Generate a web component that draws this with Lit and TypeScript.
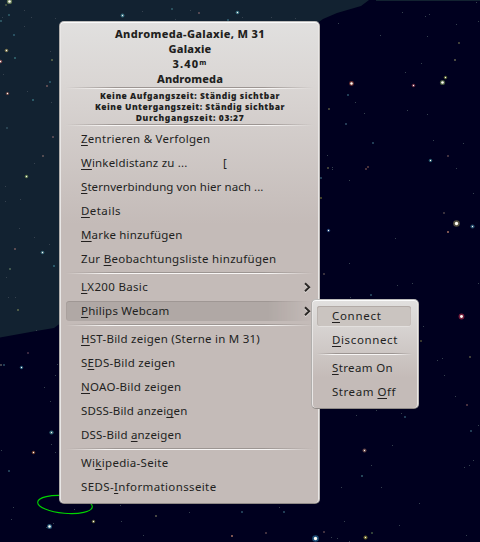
import { LitElement, html, svg, css, nothing } from "lit";
import { customElement, property } from "lit/decorators.js";

type Item = { text: string; key?: number; width: number; shortcut?: string; sub?: boolean; active?: boolean };
type Entry = Item | null;

/** A run of text spread to a given width through its letter spacing; `key` is the accelerator's index. */
@customElement("fit-text")
class FitText extends LitElement {
  @property() text = "";
  @property({ type: Number }) key = -1;
  @property({ type: Number }) width = 0;

  static styles = css`
    :host { display: inline-block; white-space: pre; }
    u { text-decoration: underline 1px; text-underline-offset: 2px; text-decoration-skip-ink: none; }
  `;

  private fit() {
    const span = this.renderRoot.querySelector("span") as HTMLElement;
    span.style.letterSpacing = "0px";
    const natural = span.getBoundingClientRect().width;
    span.style.letterSpacing = `${(this.width - natural) / this.text.length}px`;
  }

  updated() {
    this.fit();
    document.fonts.ready.then(() => this.fit());
  }

  render() {
    const { text: t, key: k } = this;
    return k < 0
      ? html`<span>${t}</span>`
      : html`<span>${t.slice(0, k)}<u>${t[k]}</u>${t.slice(k + 1)}</span>`;
  }
}

@customElement("menu-list")
class MenuList extends LitElement {
  @property({ attribute: false }) entries: Entry[] = [];

  static styles = css`
    :host { display: block; }
    .row {
      position: relative;
      display: flex;
      align-items: center;
      height: 24px;
      box-sizing: border-box;
      padding: 0 2px 0 15px;
    }
    .label { flex: 1; height: 24px; line-height: 24px; z-index: 1; }
    .keys { position: absolute; left: 157px; line-height: 24px; }
    .arrow { z-index: 1; width: 7px; height: 11px; }
    .arrow path { fill: none; stroke: #2b2826; stroke-width: 1.9; }
    .arrow .lit { stroke: #e4e0de; }
    .glow {
      position: absolute;
      inset: 2px 0 2px 0;
      border-radius: 3px;
      background: #b0a8a5;
      box-shadow: inset 0 1px #9f9794, inset 1px 0 #aaa19e, 0 1px #cfc8c5;
      -webkit-mask-image: linear-gradient(90deg, #000 82%, transparent);
      mask-image: linear-gradient(90deg, #000 82%, transparent);
    }
    .glow.plain {
      inset: 2px 1px 2px 0;
      background: #cac4c0;
      box-shadow: inset 0 1px #b2aaa6, inset 1px 0 #bbb4b0, inset -1px 0 #c4bcb8, 0 1px #e3e0de;
      -webkit-mask-image: none;
      mask-image: none;
    }
    .sep {
      height: 2px;
      padding: 1px 0;
    }
    .sep i { display: block; height: 1px; background: linear-gradient(90deg, transparent, #9c9592 20%, #9c9592 80%, transparent); }
    .sep i + i { background: linear-gradient(90deg, transparent, #f8f6f5 16%, #f8f6f5 82%, transparent); }
  `;

  render() {
    return this.entries.map((e) =>
      e === null
        ? html`<div class="sep"><i></i><i></i></div>`
        : html`<div class="row">
            ${e.active ? html`<div class="glow ${e.sub ? "" : "plain"}"></div>` : nothing}
            <div class="label"><fit-text .text=${e.text} .key=${e.key ?? -1} .width=${e.width}></fit-text></div>
            ${e.shortcut ? html`<span class="keys">${e.shortcut}</span>` : nothing}
            ${e.sub
              ? html`<svg class="arrow" viewBox="0 0 7 11">
                  <path class="lit" d="M1 2.2 L5.2 6.2 L1 10.2" />
                  <path d="M1 1.2 L5.2 5.2 L1 9.2" />
                </svg>`
              : nothing}
          </div>`
    );
  }
}

/* x, y of faint single-pixel stars */
const DOTS: number[][] = [
  [24, 10], [24, 26], [142, 11], [190, 10], [175, 19], [50, 51], [3, 74], [27, 91], [51, 102], [34, 163],
  [2, 17], [31, 17], [55, 18], [242, 17], [271, 17], [295, 18], [338, 23], [402, 12], [425, 16], [429, 14],
  [456, 24], [476, 2], [380, 35], [427, 36], [421, 63], [405, 72], [355, 102], [364, 113], [407, 110], [427, 114],
  [433, 140], [463, 143], [327, 155], [332, 167], [332, 169], [456, 168], [478, 21],
  [5, 186], [5, 201], [20, 199], [19, 228], [34, 237], [49, 244], [6, 277], [8, 297], [15, 297], [36, 330],
  [349, 180], [473, 193], [395, 238], [349, 263], [397, 285], [412, 283], [350, 297], [423, 326], [442, 358], [478, 283],
  [55, 375], [44, 387], [50, 401], [51, 444], [55, 452], [1, 450], [13, 507], [11, 519], [53, 523], [46, 527], [74, 509],
  [120, 505], [121, 521], [143, 535], [189, 512], [437, 360], [444, 375], [455, 396], [356, 415], [376, 410], [401, 413],
  [478, 425], [392, 445], [371, 465], [341, 487], [381, 487], [464, 467], [469, 465], [473, 460], [419, 503], [279, 507],
  [344, 521], [399, 525], [331, 537], [337, 538], [349, 541], [466, 535], [57, 364],
];
/* x, y, colour of small coloured stars, two pixels wide */
const SMALL: [number, number, string][] = [
  [5, 4, "#3c4b40"], [8, 14, "#29505d"], [0, 20, "#2b525f"], [13, 34, "#285061"], [14, 57, "#2b5963"], [51, 59, "#4d5a46"],
  [49, 81, "#285061"], [46, 85, "#5a4a50"], [32, 99, "#2b5966"], [6, 127, "#294352"], [52, 136, "#524751"], [42, 155, "#524b50"],
  [171, 8, "#29505d"], [198, 12, "#524751"], [227, 19, "#285061"], [218, 42, "#464646"],
  [458, 42, "#3f3f38"], [454, 59, "#4a4a42"], [347, 94, "#203c55"], [328, 108, "#3f3f38"], [345, 123, "#243a55"], [372, 142, "#203c55"],
  [447, 155, "#40303f"], [367, 166, "#47303a"], [365, 168, "#47303a"], [327, 167, "#3f3f38"], [320, 177, "#203c55"],
  [14, 248, "#5a4a50"], [9, 268, "#41584f"], [53, 265, "#29596a"], [17, 309, "#4d5a46"], [27, 352, "#38263f"],
  [443, 212, "#38303c"], [447, 231, "#7a5350"], [320, 197, "#3f3f28"], [323, 273, "#38303c"], [370, 294, "#203c55"], [420, 340, "#38382f"],
  [469, 356, "#3f3f38"], [0, 364, "#40404a"], [3, 364, "#203c55"], [8, 470, "#203c55"], [155, 515, "#464642"], [231, 535, "#7a5350"],
  [466, 404, "#47303f"], [404, 416, "#203c55"], [470, 430, "#203c55"], [361, 475, "#244558"], [241, 511, "#203c55"],
  [265, 532, "#40303f"], [323, 531, "#40303f"], [371, 532, "#303f38"], [283, 511, "#203c55"],
];
/* x, y, halo colour, halo radius of bright stars */
const BRIGHT: [number, number, string, number][] = [
  [9, 1, "#9ab36a", 2.6], [122, 15, "#4f9fb0", 1.9], [6, 50, "#b3a05a", 1.8], [0, 61, "#c06060", 1.8], [7, 93, "#b06050", 1.6],
  [26, 176, "#8fb35a", 1.7], [237, 12, "#4f9fb0", 1.8], [351, 83, "#b05040", 2.4], [413, 85, "#a04050", 1.8],
  [442, 82, "#6f8f50", 2.6], [445, 77, "#7f8f30", 1.7], [430, 160, "#2f7f90", 1.8], [42, 252, "#4f90a0", 1.8],
  [456, 223, "#8a8355", 3.3], [472, 226, "#3f80a0", 2.1], [328, 230, "#2f60a0", 1.7], [461, 316, "#c03050", 2.9],
  [21, 367, "#2f80a0", 1.7], [51, 432, "#4fa0a8", 2.1], [33, 452, "#b06030", 1.7], [49, 526, "#3f90b0", 2.5],
  [93, 521, "#90903f", 1.7], [364, 450, "#a07060", 2], [315, 538, "#2f80b0", 3.3], [365, 537, "#a8a030", 2],
];

@customElement("star-sky")
class StarSky extends LitElement {
  static styles = css`
    :host { display: block; }
    svg { display: block; width: 480px; height: 542px; }
    .px { shape-rendering: crispEdges; }
    .earth { fill: #122231; }
    .dot { fill: #35414e; }
    .core { fill: #fffdf4; }
    .ring { fill: none; stroke: #00d400; stroke-width: 1.1; }
  `;

  render() {
    return html`<svg viewBox="0 0 480 542">
      <path class="earth" d="M0 0H369L361 6L337 13L323 19L316 24L62 322L54 328L36 331L0 337.5Z" />
      <rect class="earth px" x="376" y="0" width="104" height="1" />
      <g class="px">
        ${DOTS.map(([x, y]) => svg`<rect class="dot" x=${x} y=${y} width="1" height="1"/>`)}
        ${SMALL.map(([x, y, c]) => svg`<rect x=${x} y=${y} width="2" height="2" fill=${c}/>`)}
      </g>
      ${BRIGHT.map(
        ([x, y, c, r]) => svg`
          <circle cx=${x + 0.5} cy=${y + 0.5} r=${r} fill=${c} fill-opacity="0.6"/>
          <circle class="core" cx=${x + 0.5} cy=${y + 0.5} r=${r > 2.3 ? r * 0.5 : 0.65}/>`
      )}
      <ellipse class="ring" cx="65" cy="504.5" rx="27.4" ry="8.8" transform="rotate(5 65 504.5)" />
    </svg>`;
  }
}

const OBJECT: Entry[] = [
  { text: "Zentrieren & Verfolgen", key: 0, width: 129.5 },
  { text: "Winkeldistanz zu ...", key: 0, width: 106.5, shortcut: "[" },
  { text: "Sternverbindung von hier nach ...", key: 0, width: 182.5 },
  { text: "Details", key: 0, width: 40 },
  { text: "Marke hinzufügen", key: 0, width: 101.5 },
  { text: "Zur Beobachtungsliste hinzufügen", key: 4, width: 195.5 },
  null,
  { text: "LX200 Basic", key: 0, width: 67, sub: true },
  { text: "Philips Webcam", key: 0, width: 88.5, sub: true, active: true },
  null,
  { text: "HST-Bild zeigen (Sterne in M 31)", key: 0, width: 179 },
  { text: "SEDS-Bild zeigen", key: 1, width: 94.5 },
  { text: "NOAO-Bild zeigen", key: 0, width: 100.5 },
  { text: "SDSS-Bild anzeigen", key: 15, width: 106.5 },
  { text: "DSS-Bild anzeigen", key: 9, width: 100.5 },
  null,
  { text: "Wikipedia-Seite", key: 2, width: 87.5 },
  { text: "SEDS-Informationsseite", key: 5, width: 135.5 },
];

const DEVICE: Entry[] = [
  { text: "Connect", key: 0, width: 49.5, active: true },
  { text: "Disconnect", key: 0, width: 66 },
  null,
  { text: "Stream On", key: 0, width: 61 },
  { text: "Stream Off", key: 7, width: 64 },
];

@customElement("app-root")
class AppRoot extends LitElement {
  static styles = css`
    :host {
      display: block;
      position: relative;
      width: 480px;
      height: 542px;
      overflow: hidden;
      background: #00001f;
      color: #221f1e;
      font: 11.5px "Noto Sans", "Open Sans", sans-serif;
    }
    .menu {
      position: absolute;
      box-sizing: border-box;
      border-radius: 5px;
      border: 1px solid;
      border-color: #bcbcbb #b9b5b2 #8f8a87 #b0aeac;
      background: linear-gradient(#e1e0df, #dad6d4 60px, #c4bbb8 202px);
      box-shadow: inset 0 1px #fbfbfb, inset 1px 0 #e9e7e6, inset -1px 0 #e9e7e6;
    }
    .object { left: 59px; top: 21px; width: 261px; height: 483px; padding: 4px 6px; }
    .device { left: 311px; top: 299px; width: 108px; height: 110px; padding: 4px 6px 4px 5px;
      background: linear-gradient(#e1e0df, #c4bbb8 78px); }
    .title, .times { text-align: center; }
    .title { height: 60px; font-size: 11px; font-weight: 800; line-height: 15px; }
    .times { height: 33px; font-size: 8.5px; font-weight: 900; line-height: 11px; }
    .line { display: flex; justify-content: center; height: 15px; padding-left: 1px; }
    .times .line { height: 11px; }
  `;

  render() {
    const lines = (rows: [string, number][]) =>
      rows.map(([t, w]) => html`<div class="line"><fit-text .text=${t} .width=${w}></fit-text></div>`);
    return html`
      <star-sky></star-sky>
      <div class="menu object">
        <div class="title">
          ${lines([["Andromeda-Galaxie, M 31", 150], ["Galaxie", 43], ["3.40ᵐ", 35], ["Andromeda", 66]])}
        </div>
        <menu-list .entries=${[null]}></menu-list>
        <div class="times">
          ${lines([
            ["Keine Aufgangszeit: Ständig sichtbar", 180],
            ["Keine Untergangszeit: Ständig sichtbar", 190],
            ["Durchgangszeit: 03:27", 108.5],
          ])}
        </div>
        <menu-list .entries=${[null, ...OBJECT]}></menu-list>
      </div>
      <div class="menu device"><menu-list .entries=${DEVICE}></menu-list></div>
    `;
  }
}
